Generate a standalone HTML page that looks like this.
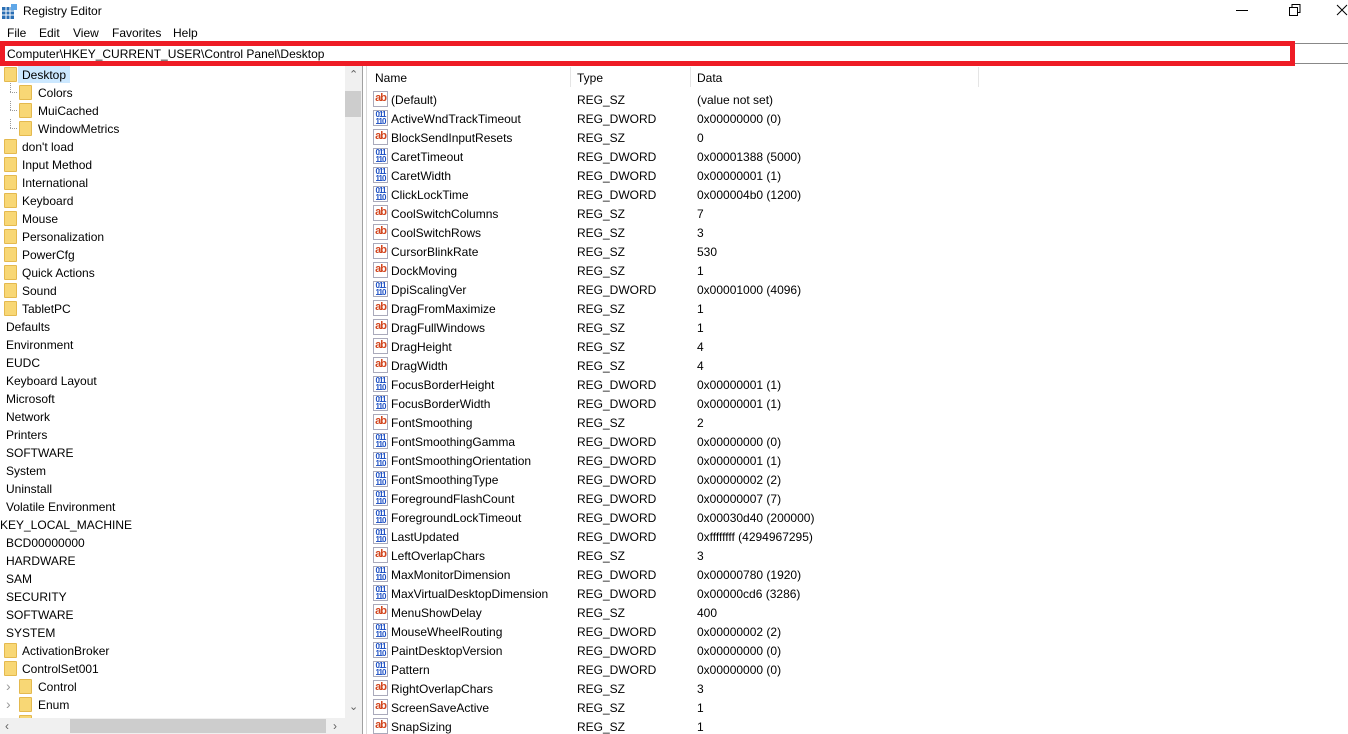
<!DOCTYPE html><html><head><style>
*{margin:0;padding:0;box-sizing:border-box}
body{width:1348px;height:734px;overflow:hidden;background:#fff;font-family:"Liberation Sans",sans-serif;font-size:12px;color:#000;position:relative}
.a{position:absolute;white-space:nowrap}
.f{position:absolute;width:13px;height:15px;background:#f8d775;border:1px solid #e4b94e;border-radius:1px}
.ic{position:absolute;width:15px;height:16px;border:1px solid #aab;background:#fff;font-weight:bold;text-align:center;letter-spacing:-1px;overflow:hidden}
.ab{color:#d2451e;font-size:11px;line-height:12px}.bn{color:#1c4fc4;font-size:8px;line-height:7px}
</style></head><body>
<svg class="a" style="left:2px;top:4px" width="15" height="15"><rect x="0" y="3" width="12" height="12" fill="#2a6fb5"/><g stroke="#fff" stroke-width="1"><line x1="4" y1="3" x2="4" y2="15"/><line x1="8" y1="3" x2="8" y2="15"/><line x1="0" y1="7" x2="12" y2="7"/><line x1="0" y1="11" x2="12" y2="11"/></g><rect x="9" y="0" width="6" height="6" fill="#5fa7e8"/></svg>
<div class="a" style="left:23px;top:4px">Registry Editor</div>
<div class="a" style="left:1236px;top:10px;width:12px;height:1px;background:#000"></div>
<svg class="a" style="left:1289px;top:4px" width="12" height="12"><rect x="0.5" y="3.5" width="8" height="8" fill="none" stroke="#000"/><path d="M3 3.5V0.5h8v8H8.5" fill="none" stroke="#000"/></svg>
<svg class="a" style="left:1336px;top:4px" width="12" height="12"><path d="M1 1L11 11M11 1L1 11" stroke="#000"/></svg>
<div class="a" style="left:7px;top:26px">File</div><div class="a" style="left:39px;top:26px">Edit</div><div class="a" style="left:73px;top:26px">View</div><div class="a" style="left:112px;top:26px">Favorites</div><div class="a" style="left:173px;top:26px">Help</div>
<div class="a" style="left:1295px;top:43px;width:53px;height:21px;border-top:1px solid #888;border-bottom:1px solid #888"></div>
<div class="a" style="left:0;top:41px;width:1295px;height:25px;border:5px solid #ee1c25"></div>
<div class="a" style="left:7px;top:47px">Computer\HKEY_CURRENT_USER\Control Panel\Desktop</div>
<div class="a" style="left:0;top:66px;width:345px;height:652px;overflow:hidden"><div id="tree"></div></div>
<div class="a" style="left:345px;top:66px;width:17px;height:652px;background:#f0f0f0"></div>
<div class="a" style="left:345px;top:91px;width:16px;height:26px;background:#cdcdcd"></div>
<div class="a" style="left:349px;top:68px;color:#606060;font-size:11px">&#8963;</div>
<div class="a" style="left:349px;top:700px;color:#606060;font-size:11px">&#8964;</div>
<div class="a" style="left:0;top:718px;width:362px;height:16px;background:#f0f0f0"></div>
<div class="a" style="left:70px;top:719px;width:256px;height:14px;background:#cdcdcd"></div>
<div class="a" style="left:5px;top:719px;color:#606060">&lsaquo;</div><div class="a" style="left:333px;top:719px;color:#606060">&rsaquo;</div>
<div class="a" style="left:362px;top:66px;width:1px;height:668px;background:#a0a0a0"></div>
<div class="a" style="left:366px;top:66px;width:1px;height:668px;background:#dadada"></div>
<div class="a" style="left:570px;top:67px;width:1px;height:20px;background:#e5e5e5"></div>
<div class="a" style="left:690px;top:67px;width:1px;height:20px;background:#e5e5e5"></div>
<div class="a" style="left:978px;top:67px;width:1px;height:20px;background:#e5e5e5"></div>
<div class="a" style="left:375px;top:71px">Name</div><div class="a" style="left:577px;top:71px">Type</div><div class="a" style="left:697px;top:71px">Data</div>
<div id="list"></div>
<script>
var t=[["Desktop",0],["Colors",1],["MuiCached",1],["WindowMetrics",1],["don't load",0],["Input Method",0],["International",0],["Keyboard",0],["Mouse",0],["Personalization",0],["PowerCfg",0],["Quick Actions",0],["Sound",0],["TabletPC",0],["Defaults",-1],["Environment",-1],["EUDC",-1],["Keyboard Layout",-1],["Microsoft",-1],["Network",-1],["Printers",-1],["SOFTWARE",-1],["System",-1],["Uninstall",-1],["Volatile Environment",-1],["KEY_LOCAL_MACHINE",-2],["BCD00000000",-1],["HARDWARE",-1],["SAM",-1],["SECURITY",-1],["SOFTWARE",-1],["SYSTEM",-1],["ActivationBroker",0],["ControlSet001",0],["Control",2],["Enum",2],["Hardware Profiles",2]];
var h='<div class="a" style="left:18px;top:0px;width:52px;height:17px;background:#cce8ff"></div>';t.forEach(function(r,i){var y=i*18-1;var lv=r[1];
if(lv>=0){var fx=lv==0?4:19;h+='<div class="f" style="left:'+fx+'px;top:'+(y+2)+'px"></div>';}
var tx=lv==0?22:lv>0?38:lv==-1?6:0;
if(lv==1)h+='<div class="a" style="left:10px;top:'+(y+9)+'px;width:7px;border-top:1px dotted #999"></div><div class="a" style="left:10px;top:'+(y)+'px;height:9px;border-left:1px dotted #999"></div>';
if(lv==2)h+='<div class="a" style="left:6px;top:'+(y+1)+'px;color:#999;font-size:14px">&rsaquo;</div>';
h+='<div class="a" style="left:'+tx+'px;top:'+(y+3)+'px">'+r[0]+'</div>';});
document.getElementById("tree").innerHTML=h;
var L=[["(Default)","S","(value not set)"],["ActiveWndTrackTimeout","D","0x00000000 (0)"],["BlockSendInputResets","S","0"],["CaretTimeout","D","0x00001388 (5000)"],["CaretWidth","D","0x00000001 (1)"],["ClickLockTime","D","0x000004b0 (1200)"],["CoolSwitchColumns","S","7"],["CoolSwitchRows","S","3"],["CursorBlinkRate","S","530"],["DockMoving","S","1"],["DpiScalingVer","D","0x00001000 (4096)"],["DragFromMaximize","S","1"],["DragFullWindows","S","1"],["DragHeight","S","4"],["DragWidth","S","4"],["FocusBorderHeight","D","0x00000001 (1)"],["FocusBorderWidth","D","0x00000001 (1)"],["FontSmoothing","S","2"],["FontSmoothingGamma","D","0x00000000 (0)"],["FontSmoothingOrientation","D","0x00000001 (1)"],["FontSmoothingType","D","0x00000002 (2)"],["ForegroundFlashCount","D","0x00000007 (7)"],["ForegroundLockTimeout","D","0x00030d40 (200000)"],["LastUpdated","D","0xffffffff (4294967295)"],["LeftOverlapChars","S","3"],["MaxMonitorDimension","D","0x00000780 (1920)"],["MaxVirtualDesktopDimension","D","0x00000cd6 (3286)"],["MenuShowDelay","S","400"],["MouseWheelRouting","D","0x00000002 (2)"],["PaintDesktopVersion","D","0x00000000 (0)"],["Pattern","D","0x00000000 (0)"],["RightOverlapChars","S","3"],["ScreenSaveActive","S","1"],["SnapSizing","S","1"]];
h="";L.forEach(function(r,i){var y=90+i*19;
h+=r[1]=="S"?'<div class="ic ab" style="left:373px;top:'+(y+1)+'px">ab</div>':'<div class="ic bn" style="left:373px;top:'+(y+1)+'px">011<br>110</div>';
h+='<div class="a" style="left:391px;top:'+(y+3)+'px">'+r[0]+'</div><div class="a" style="left:577px;top:'+(y+3)+'px">'+(r[1]=="S"?"REG_SZ":"REG_DWORD")+'</div><div class="a" style="left:697px;top:'+(y+3)+'px">'+r[2]+'</div>';});
document.getElementById("list").innerHTML=h;
</script>
</body></html>
